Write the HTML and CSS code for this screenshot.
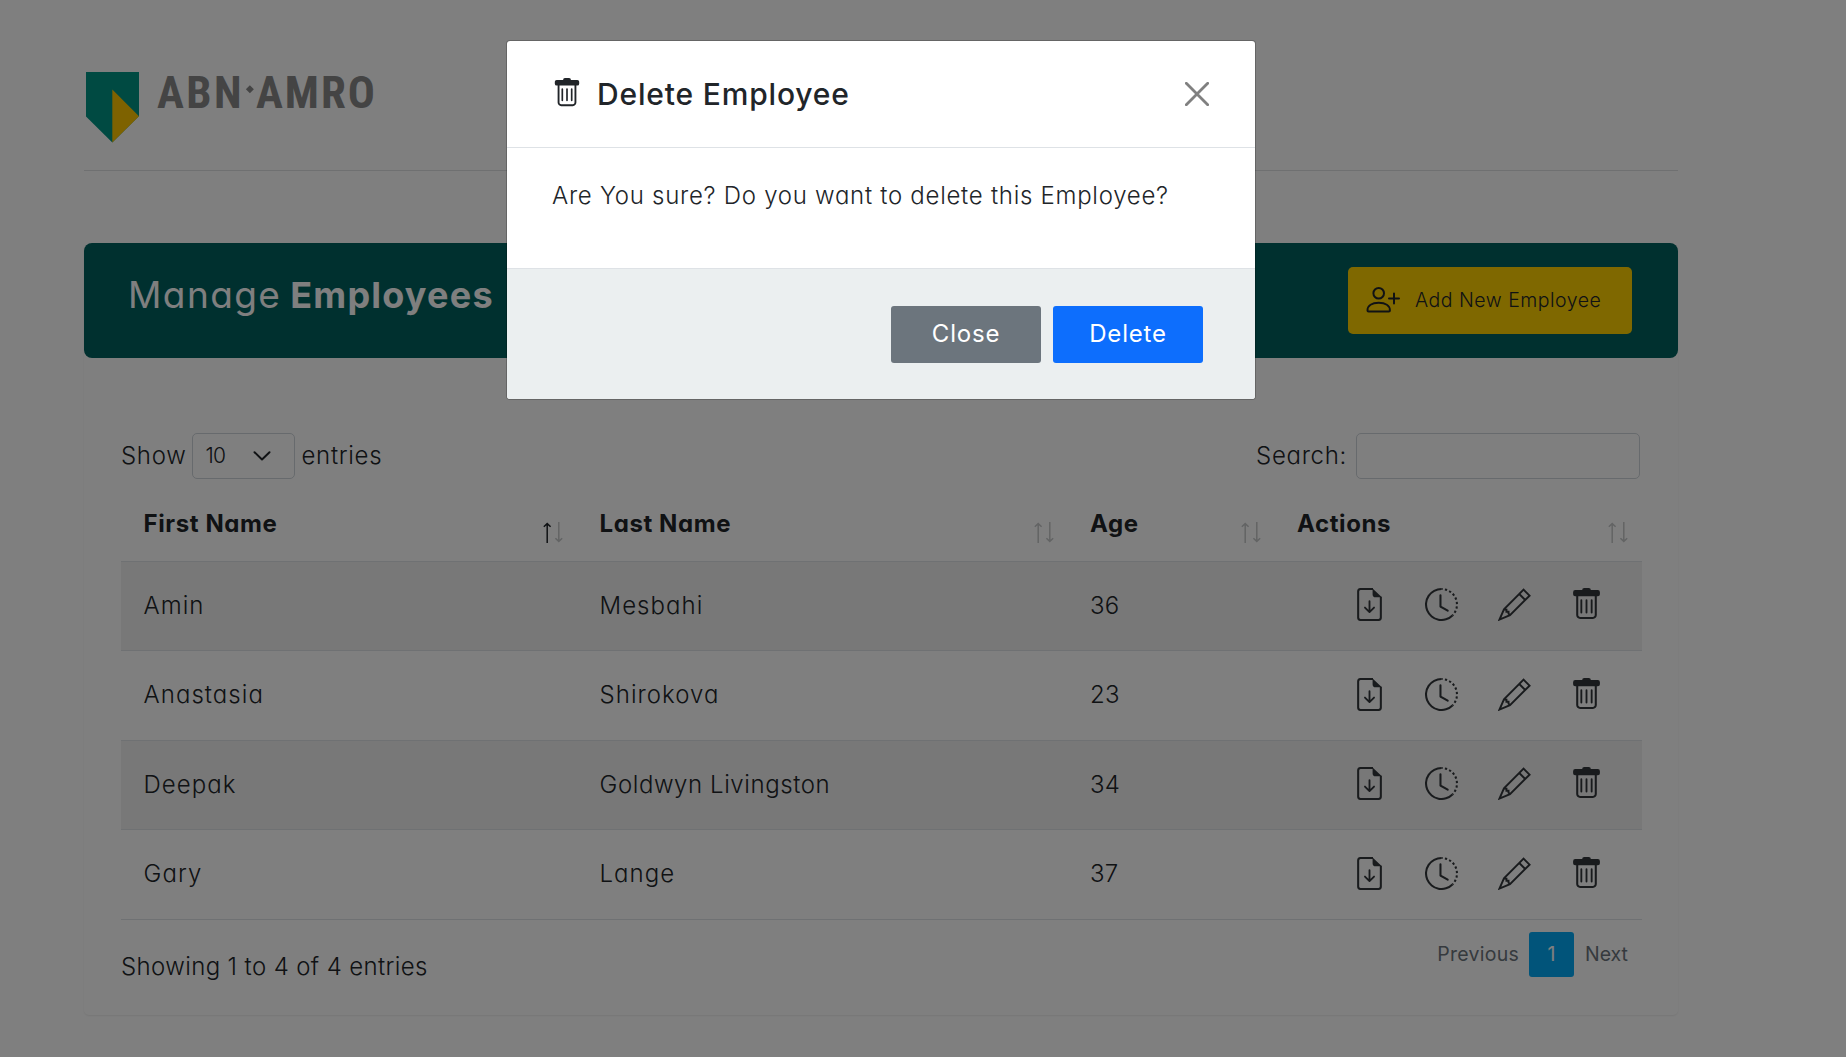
FILE: index.html
```html
<!DOCTYPE html>
<html lang="en">
<head>
<meta charset="utf-8">
<title>Manage Employees</title>
<link rel="stylesheet" href="styles.css">
</head>
<body>
<svg class="sprite" width="0" height="0" aria-hidden="true">
  <symbol id="file-down" viewBox="0 0 16 16">
    <path d="M9.7.5H3.6A1.2 1.2 0 0 0 2.5 1.7v12.6a1.2 1.2 0 0 0 1.1 1.2h8.8a1.2 1.2 0 0 0 1.1-1.2V4.2" fill="none" stroke="currentColor"/>
    <path d="M9.5.3 14 4.5h-3A1.3 1.3 0 0 1 9.5 3.2z" fill="currentColor"/>
    <path d="M8 6.4v5.2M5.8 9.5 8 11.7l2.2-2.2" fill="none" stroke="currentColor" stroke-width=".9" stroke-linecap="round" stroke-linejoin="round"/>
  </symbol>
  <symbol id="clock-history" viewBox="0 0 16 16">
    <path fill="currentColor" d="M8.515 1.019A7 7 0 0 0 8 1V0a8 8 0 0 1 .589.022l-.074.997zm2.004.45a7.003 7.003 0 0 0-.985-.299l.219-.976c.383.086.76.2 1.126.342l-.36.933zm1.37.71a7.01 7.01 0 0 0-.439-.27l.493-.87a8.025 8.025 0 0 1 .979.654l-.615.789a6.996 6.996 0 0 0-.418-.302zm1.834 1.79a6.99 6.99 0 0 0-.653-.796l.724-.69c.27.285.52.59.747.91l-.818.576zm.744 1.352a7.08 7.08 0 0 0-.214-.468l.893-.45a7.976 7.976 0 0 1 .45 1.088l-.95.313a7.023 7.023 0 0 0-.179-.483zm.53 2.507a6.991 6.991 0 0 0-.1-1.025l.985-.17c.067.386.106.778.116 1.17l-1 .025zm-.131 1.538c.033-.17.06-.339.081-.51l.993.123a7.957 7.957 0 0 1-.23 1.155l-.964-.267c.046-.165.086-.332.12-.501zm-.952 2.379c.184-.29.346-.594.486-.908l.914.405c-.16.36-.345.706-.555 1.038l-.845-.535zm-.964 1.205c.122-.122.239-.248.35-.378l.758.653a8.073 8.073 0 0 1-.401.432l-.707-.707z"/>
    <path fill="currentColor" d="M8 1a7 7 0 1 0 4.95 11.95l.707.707A8.001 8.001 0 1 1 8 0v1z"/>
    <path fill="currentColor" d="M7.5 3a.5.5 0 0 1 .5.5v5.21l3.248 1.856a.5.5 0 0 1-.496.868l-3.5-2A.5.5 0 0 1 7 9V3.5a.5.5 0 0 1 .5-.5z"/>
  </symbol>
  <symbol id="pencil" viewBox="0 0 16 16">
    <path d="M12.4.8 15.3 3.7 5.8 13.2 .7 15.3 2.9 10.3zM10.300 2.900l2.900 2.900M2.900 10.300l1.200.2v1h1v.9l.8.8" fill="none" stroke="currentColor" stroke-width=".95"/>
  </symbol>
  <symbol id="trash" viewBox="0 0 16 16">
    <path d="M2.5 1h3.4a1 1 0 0 1 1-1h2.200a1 1 0 0 1 1 1h3.400a1 1 0 0 1 1 1v1a1 1 0 0 1-1 1h-11a1 1 0 0 1-1-1V2a1 1 0 0 1 1-1z" fill="currentColor"/>
    <path d="M3.5 3.5v9.600a1.400 1.400 0 0 0 1.400 1.400h6.200a1.400 1.400 0 0 0 1.400-1.400V3.500" fill="none" stroke="currentColor"/>
    <path d="M5.5 5.9v6M8 5.9v6M10.5 5.9v6" fill="none" stroke="currentColor" stroke-width=".9" stroke-linecap="round"/>
  </symbol>
  <symbol id="sort" viewBox="0 0 20 21">
    <path d="M4.2 21V2M.8 4.8 4.2 1.6 7.6 4.8" class="sort-up"/>
    <path d="M15.8 0v19M12.4 16.2l3.4 3.2 3.4-3.2" class="sort-down"/>
  </symbol>
</svg>

<div class="container">
  <header class="brand">
    <svg class="logo" width="300" height="92" viewBox="0 -20 300 92" role="img">
      <path d="M2 0h53v44L28.3 70.5 2 44.4z" fill="#009484"/>
      <path d="M28.3 17.5 55 44.3 28.3 70.5z" fill="#fcc400"/>
      <text class="logo-text" x="73" y="36" textLength="84.500">ABN</text>
      <path d="M165.9 13.2l4 4-4 4-4-4z" fill="#888"/>
      <text class="logo-text" x="172" y="36" textLength="119">AMRO</text>
    </svg>
  </header>

  <main class="card">
    <div class="title-bar">
      <h1 class="title"><span class="thin">Manage</span> <b>Employees</b></h1>
      <button class="add">
        <svg width="34" height="34" viewBox="0 0 34 34" fill="none" stroke="currentColor" stroke-width="2">
          <circle cx="12.7" cy="10.3" r="5.3"/>
          <path d="M1.5 27.5c0-5 4.5-7.7 11.2-7.7s11.2 2.7 11.2 7.7c0 .6-.4.9-1 .9H2.500c-.6 0-1-.3-1-.9z"/>
          <path d="M28 10.500v10M23 15.500h10" stroke-linecap="round"/>
        </svg>
        <span>Add New Employee</span>
      </button>
    </div>

    <div class="card-body">
      <div class="controls">
        <label class="length"><span>Show</span>
          <span class="select"><span>10</span><svg width="18" height="10" viewBox="0 0 18 10"><path d="M1.500 1.200 9 8.500 16.500 1.200" fill="none" stroke="currentColor" stroke-width="2" stroke-linecap="round" stroke-linejoin="round"/></svg></span>
          <span>entries</span></label>
        <label class="search"><span>Search:</span><input type="search"></label>
      </div>

      <div class="table">
        <div class="row head">
          <div class="asc">First Name<svg class="sort"><use href="#sort"/></svg></div>
          <div>Last Name<svg class="sort"><use href="#sort"/></svg></div>
          <div>Age<svg class="sort"><use href="#sort"/></svg></div>
          <div>Actions<svg class="sort"><use href="#sort"/></svg></div>
        </div>
        <div class="row">
          <div>Amin</div><div>Mesbahi</div><div class="age">36</div>
          <div class="actions"><svg><use href="#file-down"/></svg><svg><use href="#clock-history"/></svg><svg><use href="#pencil"/></svg><svg><use href="#trash"/></svg></div>
        </div>
        <div class="row">
          <div>Anastasia</div><div>Shirokova</div><div class="age">23</div>
          <div class="actions"><svg><use href="#file-down"/></svg><svg><use href="#clock-history"/></svg><svg><use href="#pencil"/></svg><svg><use href="#trash"/></svg></div>
        </div>
        <div class="row">
          <div>Deepak</div><div class="long">Goldwyn Livingston</div><div class="age">34</div>
          <div class="actions"><svg><use href="#file-down"/></svg><svg><use href="#clock-history"/></svg><svg><use href="#pencil"/></svg><svg><use href="#trash"/></svg></div>
        </div>
        <div class="row">
          <div>Gary</div><div>Lange</div><div class="age">37</div>
          <div class="actions"><svg><use href="#file-down"/></svg><svg><use href="#clock-history"/></svg><svg><use href="#pencil"/></svg><svg><use href="#trash"/></svg></div>
        </div>
      </div>

      <footer class="table-footer">
        <span class="info">Showing 1 to 4 of 4 entries</span>
        <nav class="pager"><span class="prev">Previous</span><span class="current">1</span><span class="next">Next</span></nav>
      </footer>
    </div>
  </main>
</div>

<div class="backdrop">
  <section class="modal" role="dialog">
    <header class="modal-header">
      <svg class="modal-icon" width="30" height="30"><use href="#trash"/></svg>
      <h2>Delete Employee</h2>
      <svg class="close" width="24" height="24" viewBox="0 0 24 24"><path d="M1.300 1.300l21.400 21.400M22.700 1.300 1.300 22.700" stroke="#808080" stroke-width="2.800" stroke-linecap="round"/></svg>
    </header>
    <p class="modal-body">Are You sure? Do you want to delete this Employee?</p>
    <footer class="modal-footer">
      <button class="btn secondary">Close</button>
      <button class="btn primary">Delete</button>
    </footer>
  </section>
</div>
</body>
</html>
```
FILE: styles.css
```css
* { box-sizing: border-box; }

body {
  margin: 0;
  height: 1057px;
  overflow: hidden;
  background: #fff;
  color: #212529;
  font: 300 24px/36px Inter, "Open Sans", sans-serif;
  font-feature-settings: "cv11";
}

h1, h2, p { margin: 0; }
button { border: 0; font: inherit; font-feature-settings: inherit; }
svg { display: block; flex: none; }
.sprite { position: absolute; }

.container { width: 1594px; margin-left: 84px; }

.brand {
  height: 171px;
  padding-top: 52px;
  border-bottom: 1px solid #dee0e2;
}
.logo-text {
  font: 700 45px "Roboto Condensed", sans-serif;
  fill: #888;
}

.card {
  height: 772px;
  margin-top: 72px;
  border-radius: 5px;
  box-shadow: 0 1px 2px rgba(0, 0, 0, .08);
}

.title-bar {
  display: flex;
  justify-content: space-between;
  align-items: center;
  height: 115px;
  padding: 0 46px 0 44px;
  border-radius: 8px;
  background: #00605e;
}
.title {
  display: flex;
  align-items: baseline;
  gap: 9px;
  margin-top: -11px;
  color: #fff;
  font-size: 36px;
  letter-spacing: 1.2px;
}
.title b { font-weight: 700; }
.title .thin { font-size: 37px; font-weight: 400; letter-spacing: 1.4px; }

.add {
  display: flex;
  align-items: center;
  gap: 15px;
  width: 284px;
  height: 67px;
  padding: 0 0 0 18px;
  border-radius: 5px;
  background: #ffd000;
  color: #212529;
  font-size: 19.5px;
  letter-spacing: .5px;
}
.add svg { margin-top: -1px; }
.add span { margin-top: -2px; }

.card-body { padding: 75px 36px 0 37px; }

.controls {
  display: flex;
  justify-content: space-between;
  height: 46px;
  padding-right: 2px;
  letter-spacing: .7px;
}
.length, .search { display: flex; align-items: center; gap: 6px; }
.select {
  display: flex;
  align-items: center;
  justify-content: space-between;
  width: 103px;
  height: 46px;
  padding: 0 23px 0 12px;
  border: 1px solid #ced4da;
  border-radius: 5px;
  font-size: 21px;
  letter-spacing: -.7px;
}
.search { gap: 9px; }
.search input {
  width: 284px;
  height: 46px;
  border: 1px solid #ced4da;
  border-radius: 5px;
  background: transparent;
}

.row {
  display: grid;
  grid-template-columns: 456px 490.5px 207px 367.5px;
  align-items: center;
  height: 89.5px;
  border-bottom: 1px solid #dee2e6;
  letter-spacing: 1.05px;
}
.row > div { padding-left: 22.5px; }
.row:nth-child(even) { background: #f0f0f0; }
.row > .long { letter-spacing: .58px; }
.row > .age { letter-spacing: .2px; }

.row.head {
  align-items: start;
  height: 82.6px;
  font-weight: 700;
  letter-spacing: .6px;
}
.head > div {
  display: flex;
  justify-content: space-between;
  padding: 27px 14px 0 22.5px;
}
.sort {
  width: 20px;
  height: 21px;
  margin-top: 16px;
  fill: none;
  stroke: #c6c8c9;
  stroke-width: 1.5;
}
.asc .sort { --up: #212529; }
.sort-up { stroke: var(--up, #c6c8c9); }

.row > .actions {
  display: flex;
  justify-content: flex-end;
  gap: 39.5px;
  padding-right: 39px;
  margin-bottom: 2px;
  color: #33373b;
}
.actions svg { width: 33px; height: 33px; }

.table-footer {
  display: flex;
  justify-content: space-between;
  padding-top: 12px;
}
.info { margin-top: 17px; letter-spacing: .38px; }
.pager {
  display: flex;
  align-items: center;
  height: 45px;
  margin-right: 14px;
  color: #6c757d;
  font-size: 19.5px;
  font-weight: 400;
}
.prev { margin-right: 10px; letter-spacing: .25px; }
.current {
  width: 45px;
  margin-right: 11px;
  border-radius: 3px;
  background: #03a9f4;
  color: #fff;
  line-height: 45px;
  text-align: center;
}

.backdrop {
  position: absolute;
  inset: 0;
  padding: 40px 0 0 506px;
  background: rgba(0, 0, 0, .5);
}
.modal {
  width: 750px;
  height: 360px;
  overflow: hidden;
  border: 1px solid rgba(0, 0, 0, .2);
  border-radius: 4px;
  background: #fff;
  background-clip: padding-box;
}
.modal-header {
  display: flex;
  align-items: center;
  height: 107px;
  padding: 0 46px 0 45px;
  border-bottom: 1px solid #dee2e6;
}
.modal-icon { margin-bottom: 3px; color: #212529; }
.modal h2 {
  flex: 1;
  margin-left: 15px;
  font-size: 30px;
  font-weight: 500;
  letter-spacing: .83px;
}
.modal-body {
  height: 120px;
  padding: 30px 45px 0;
  letter-spacing: .72px;
}
.modal-footer {
  display: flex;
  justify-content: flex-end;
  gap: 12px;
  height: 131px;
  padding: 37px 52px 0;
  border-top: 1px solid #dee2e6;
  background: #ebeff0;
}
.btn {
  width: 150px;
  height: 57px;
  padding: 0 0 2px;
  border-radius: 3px;
  color: #fff;
  font-weight: 400;
  letter-spacing: .8px;
}
.secondary { background: #6c757d; }
.primary { background: #0d6efd; }
```
